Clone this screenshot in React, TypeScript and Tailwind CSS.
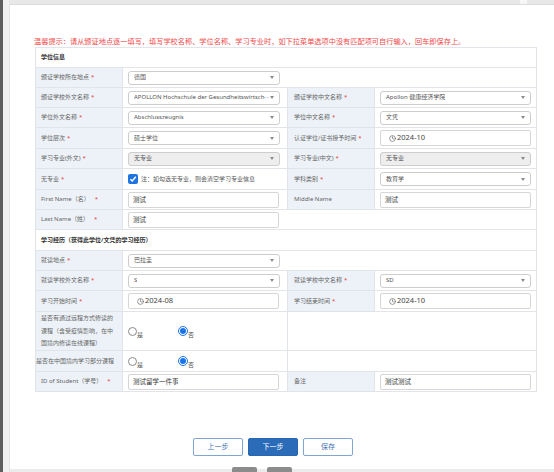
import React from "react";
import { Clock } from "lucide-react";

const F = "font-['Noto_Sans','Noto_Sans_CJK_SC',sans-serif]";

function Star({ gap }: { gap?: boolean }) {
  return <span className={gap ? "text-[#e53935] ml-[5px]" : "text-[#e53935] ml-[2px]"}>*</span>;
}

function Label({ children, req, gap, tight, right }: { children: React.ReactNode; req?: boolean; gap?: boolean; tight?: boolean; right?: boolean }) {
  return (
    <div
      className={
        (tight ? "pl-[0px] " : "pl-[5px] ") +
        (right ? "pl-[6px] " : "") +
        "bg-[#edf2f8] border-r border-[#e1e5ea] flex items-center text-[6px] leading-[12.5px] text-[#666] whitespace-nowrap"
      }
    >
      <span>
        {children}
        {req && <Star gap={gap} />}
      </span>
    </div>
  );
}

function Value({ children, noRight }: { children?: React.ReactNode; noRight?: boolean }) {
  return (
    <div className={(noRight ? "" : "border-r border-[#e1e5ea] ") + "flex items-center pl-[5px]"}>
      {children}
    </div>
  );
}

function Arrow() {
  return (
    <svg width="4" height="3" viewBox="0 0 4 3" className="shrink-0">
      <path d="M0 0h4L2 3z" fill="#8a8a8a" />
    </svg>
  );
}

function Select({ text, w, disabled }: { text: string; w?: string; disabled?: boolean }) {
  return (
    <div
      className={
        (w === "b" ? "w-[151px] " : "w-[152px] ") +
        (disabled ? "bg-[#eeeeee] " : "bg-white ") +
        "h-[14px] border border-[#cdcdcd] rounded-[3px] flex items-center justify-between pl-[5px] pr-[5px] text-[6px] text-[#555] whitespace-nowrap overflow-hidden"
      }
    >
      <span className="overflow-hidden">{text}</span>
      <Arrow />
    </div>
  );
}

function Input({ text }: { text: string }) {
  return (
    <div className="w-[151px] h-[16px] border border-[#d6d6d6] rounded-[2px] bg-white flex items-center pl-[4px] text-[6.5px] text-[#333] whitespace-nowrap">
      {text}
    </div>
  );
}

function DateInput({ text }: { text: string }) {
  return (
    <div className="w-[151px] h-[16px] border border-[#d6d6d6] rounded-[2px] bg-white flex items-center pl-[8px] gap-[1px] text-[7.5px] text-[#444] whitespace-nowrap">
      <Clock size={7} strokeWidth={2} color="#555" />
      <span>{text}</span>
    </div>
  );
}

function Radio({ checked }: { checked?: boolean }) {
  if (checked) {
    return (
      <div className="w-[10px] h-[10px] rounded-full border border-[#1a73e8] bg-white flex items-center justify-center shrink-0">
        <div className="w-[6px] h-[6px] rounded-full bg-[#1a73e8]" />
      </div>
    );
  }
  return <div className="w-[9px] h-[9px] rounded-full border border-[#8a8a8a] bg-white shrink-0" />;
}

function Radios() {
  return (
    <div className="flex items-center pl-[0px]">
      <div className="flex items-end">
        <Radio />
        <span className="text-[6px] leading-[6px] text-[#555] mb-[-2px]">是</span>
      </div>
      <div className="flex items-end ml-[35px]">
        <Radio checked />
        <span className="text-[6px] leading-[6px] text-[#555] mb-[-2px]">否</span>
      </div>
    </div>
  );
}

const rowBase = "grid grid-cols-[87px_165px_87px_162px] border-b border-[#e1e5ea]";

export default function App() {
  return (
    <div className={"w-[554px] h-[472px] flex bg-white overflow-hidden " + F}>
      <div className="w-[3px] bg-[#5e5e5e] shrink-0" />
      <div className="w-[7px] bg-[#f1f1f1] border-r border-[#e4e4e4] shrink-0" />
      <div className="flex-1 flex flex-col">
        <div className="h-[5px] flex border-b border-[#dcdcdc] shrink-0">
          <div className="w-[510px] bg-[#e8e8e8]" />
          <div className="w-[7px] bg-[#f7f7f7]" />
          <div className="flex-1 bg-[#e8e8e8]" />
        </div>
        <div className="flex-1 flex flex-col pl-[25px]">
          <div className="mt-[31px] h-[10px] leading-[10px] text-[7.2px] text-[#f04848] whitespace-nowrap -ml-[1px]">
            温馨提示：请从颁证地点逐一填写，填写学校名称、学位名称、学习专业时，如下拉菜单选项中没有匹配项可自行输入，回车即保存上。
          </div>
          <div className="mt-[1px] w-[502px] border-l border-t border-[#e1e5ea]">
            <div className="h-[20px] border-b border-r border-[#e1e5ea] flex items-center pl-[5px] text-[6px] font-bold text-[#333]">
              学位信息
            </div>
            <div className={rowBase + " h-[20px]"}>
              <Label req>颁证学校所在地点</Label>
              <Value noRight>
                <Select text="德国" />
              </Value>
              <div className="col-span-2 border-r border-[#e1e5ea]" />
            </div>
            <div className={rowBase + " h-[20px]"}>
              <Label req>颁证学校外文名称</Label>
              <Value>
                <Select text="APOLLON Hochschule der Gesundheitswirtsch···" />
              </Value>
              <Label req right>颁证学校中文名称</Label>
              <Value>
                <Select w="b" text="Apollon 健康经济学院" />
              </Value>
            </div>
            <div className={rowBase + " h-[20px]"}>
              <Label req>学位外文名称</Label>
              <Value>
                <Select text="Abschlusszeugnis" />
              </Value>
              <Label req right>学位中文名称</Label>
              <Value>
                <Select w="b" text="文凭" />
              </Value>
            </div>
            <div className={rowBase + " h-[21px]"}>
              <Label req>学位层次</Label>
              <Value>
                <Select text="硕士学位" />
              </Value>
              <Label req right>认证学位/证书授予时间</Label>
              <Value>
                <DateInput text="2024-10" />
              </Value>
            </div>
            <div className={rowBase + " h-[20px]"}>
              <Label req>学习专业(外文)</Label>
              <Value>
                <Select text="无专业" disabled />
              </Value>
              <Label req right>学习专业(中文)</Label>
              <Value>
                <Select w="b" text="无专业" disabled />
              </Value>
            </div>
            <div className={rowBase + " h-[21px]"}>
              <Label req>无专业</Label>
              <Value>
                <div className="flex items-center gap-[3px]">
                  <div className="w-[10px] h-[10px] rounded-[2px] bg-[#1f74e0] flex items-center justify-center">
                    <svg width="8" height="8" viewBox="0 0 8 8">
                      <path d="M1.4 4.2L3.2 6L6.8 1.8" stroke="white" strokeWidth="1.4" fill="none" />
                    </svg>
                  </div>
                  <span className="text-[6px] text-[#555] whitespace-nowrap">注：如勾选无专业，则会清空学习专业信息</span>
                </div>
              </Value>
              <Label req right>学科类别</Label>
              <Value>
                <Select w="b" text="教育学" />
              </Value>
            </div>
            <div className={rowBase + " h-[20px]"}>
              <Label req gap>First Name（名）</Label>
              <Value>
                <Input text="测试" />
              </Value>
              <Label right>Middle Name</Label>
              <Value>
                <Input text="测试" />
              </Value>
            </div>
            <div className={rowBase + " h-[20px]"}>
              <Label req gap>Last Name（姓）</Label>
              <Value noRight>
                <Input text="测试" />
              </Value>
              <div className="col-span-2 border-r border-[#e1e5ea]" />
            </div>
            <div className="h-[21px] border-b border-r border-[#e1e5ea] flex items-center pl-[5px] text-[6px] font-semibold text-[#333]">
              学习经历（获得此学位/文凭的学习经历）
            </div>
            <div className={rowBase + " h-[20px]"}>
              <Label req>就读地点</Label>
              <Value noRight>
                <Select text="巴拉圭" />
              </Value>
              <div className="col-span-2 border-r border-[#e1e5ea]" />
            </div>
            <div className={rowBase + " h-[20px]"}>
              <Label req>就读学校外文名称</Label>
              <Value>
                <Select text="S" />
              </Value>
              <Label req right>就读学校中文名称</Label>
              <Value>
                <Select w="b" text="SD" />
              </Value>
            </div>
            <div className={rowBase + " h-[21px]"}>
              <Label req>学习开始时间</Label>
              <Value>
                <DateInput text="2024-08" />
              </Value>
              <Label req right>学习结束时间</Label>
              <Value>
                <DateInput text="2024-10" />
              </Value>
            </div>
            <div className={rowBase + " h-[39px]"}>
              <Label>
                是否有通过远程方式修读的
                <br />
                课程（含受疫情影响，在中
                <br />
                国境内修读在线课程）
              </Label>
              <Value>
                <Radios />
              </Value>
              <div className="col-span-2 border-r border-[#e1e5ea]" />
            </div>
            <div className={rowBase + " h-[21px]"}>
              <Label tight>是否在中国境内学习部分课程</Label>
              <Value>
                <Radios />
              </Value>
              <div className="col-span-2 border-r border-[#e1e5ea]" />
            </div>
            <div className={rowBase + " h-[20px]"}>
              <Label req gap>ID of Student（学号）</Label>
              <Value>
                <Input text="测试留学一件事" />
              </Value>
              <Label right>备注</Label>
              <Value>
                <Input text="测试测试" />
              </Value>
            </div>
          </div>
          <div className="mt-[46px] flex gap-[5px] pl-[158px]">
            <button className="w-[50px] h-[18px] border border-[#7fa6d1] rounded-[2px] bg-white text-[7px] text-[#3f74b3]">
              上一步
            </button>
            <button className="w-[50px] h-[18px] border border-[#2767b2] rounded-[2px] bg-[#2a6cb8] text-[7px] text-white">
              下一步
            </button>
            <button className="w-[50px] h-[18px] border border-[#7fa6d1] rounded-[2px] bg-white text-[7px] text-[#3f74b3]">
              保存
            </button>
          </div>
        </div>
        <div className="h-[5px] flex items-end shrink-0">
          <div className="w-[222px] h-[3px] bg-[#ebebeb]" />
          <div className="w-[25px] h-[5px] bg-[#8c8c8c] rounded-t-[2px]" />
          <div className="w-[10px] h-[3px] bg-[#ebebeb]" />
          <div className="w-[25px] h-[5px] bg-[#8c8c8c] rounded-t-[2px]" />
          <div className="flex-1 h-[3px] bg-[#ebebeb]" />
        </div>
      </div>
    </div>
  );
}
